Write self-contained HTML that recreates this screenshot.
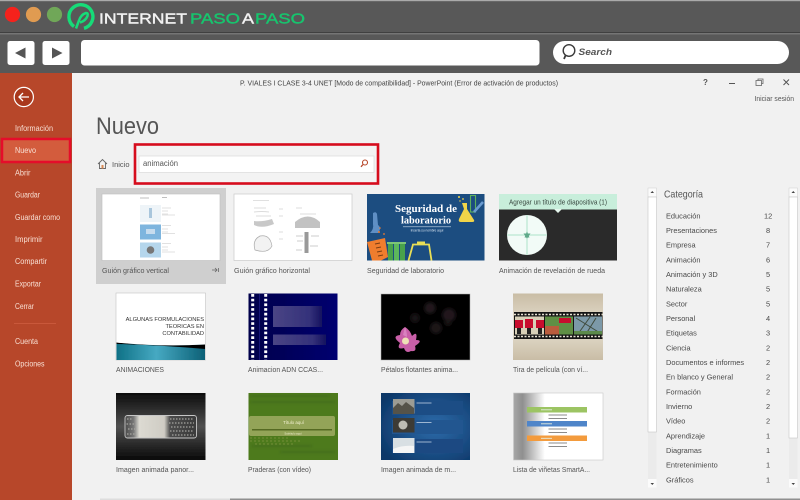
<!DOCTYPE html>
<html lang="es"><head><meta charset="utf-8"><title>PowerPoint Nuevo</title>
<style>
html,body{margin:0;padding:0;width:800px;height:500px;overflow:hidden;background:#f1f1f1}
svg{display:block;font-family:"Liberation Sans",sans-serif}
.s text{fill:#f8dfd3;font-size:8px}
.l{fill:#555;font-size:7.6px}
.c{fill:#4a4a4a;font-size:7.4px}
</style></head><body>
<svg width="800" height="500" viewBox="0 0 800 500" xmlns="http://www.w3.org/2000/svg">
<defs>
<filter id="b" x="-5%" y="-5%" width="110%" height="110%"><feGaussianBlur stdDeviation="0.35"/></filter>
<filter id="b2" x="-20%" y="-20%" width="140%" height="140%"><feGaussianBlur stdDeviation="1.4"/></filter>
<linearGradient id="teal" x1="0" x2="1"><stop offset="0" stop-color="#0f7186"/><stop offset=".45" stop-color="#46a9c2"/><stop offset="1" stop-color="#0c6076"/></linearGradient>
<linearGradient id="beige" x1="0" x2="0" y1="0" y2="1"><stop offset="0" stop-color="#c9bda5"/><stop offset=".5" stop-color="#e6dfd0"/><stop offset="1" stop-color="#c9bda6"/></linearGradient>
<linearGradient id="dark" x1="0" x2="0" y1="0" y2="1"><stop offset="0" stop-color="#0d0d0d"/><stop offset=".5" stop-color="#505050"/><stop offset="1" stop-color="#090909"/></linearGradient>
<linearGradient id="pan" x1="0" x2="1"><stop offset="0" stop-color="#4a4a4a"/><stop offset=".12" stop-color="#777"/><stop offset=".2" stop-color="#dcdad2"/><stop offset=".55" stop-color="#cfccc4"/><stop offset=".63" stop-color="#4c4c4c"/><stop offset="1" stop-color="#3a3a3a"/></linearGradient>
<radialGradient id="blue" cx=".6" cy=".5" r=".7"><stop offset="0" stop-color="#2e6cab"/><stop offset="1" stop-color="#0c3768"/></radialGradient>
<linearGradient id="gry" x1="0" x2="1"><stop offset="0" stop-color="#a8a8a8"/><stop offset=".1" stop-color="#8f8f8f"/><stop offset=".35" stop-color="#fff"/></linearGradient>
<linearGradient id="navy" x1="0" x2="1"><stop offset="0" stop-color="#00004a"/><stop offset="1" stop-color="#000070"/></linearGradient>
<linearGradient id="bar" x1="0" x2="1"><stop offset="0" stop-color="#4a4585"/><stop offset=".75" stop-color="#34317a"/><stop offset="1" stop-color="#15125f"/></linearGradient>
</defs>
<rect width="800" height="500" fill="#f1f1f1"/>
<g filter="url(#b)">
<!-- browser chrome -->
<rect width="800" height="73" fill="#595959"/>
<rect width="800" height="1.2" fill="#aaa"/>
<rect y="32" width="800" height="1" fill="#3f3f3f"/>
<rect y="33" width="800" height="1.5" fill="#757575"/>
<circle cx="12.500" cy="14.500" r="7.600" fill="#f5211c"/>
<circle cx="33.500" cy="14.500" r="7.600" fill="#e09b51"/>
<circle cx="54.500" cy="14.500" r="7.600" fill="#6fa758"/>
<path d="M74 26.500 A12 12 0 1 1 84 28.300" fill="none" stroke="#17dc78" stroke-width="3.400"/>
<path d="M76 28.500 L79 20.500 Q81 14.500 86 13 Q88.500 13 87.500 16 Q85.500 21 80 22.500" fill="none" stroke="#17dc78" stroke-width="2.500"/>
<text x="99" y="23.300" font-size="15" stroke="#f2f2f2" stroke-width=".4" fill="#f2f2f2" textLength="88" lengthAdjust="spacingAndGlyphs">INTERNET</text>
<text x="190" y="23.300" font-size="15" stroke="#17c56e" stroke-width=".4" fill="#17c56e" textLength="50" lengthAdjust="spacingAndGlyphs">PASO</text>
<text x="242" y="23.300" font-size="15" stroke="#f2f2f2" stroke-width=".4" fill="#f2f2f2" textLength="12" lengthAdjust="spacingAndGlyphs">A</text>
<text x="255" y="23.300" font-size="15" stroke="#17c56e" stroke-width=".4" fill="#17c56e" textLength="50" lengthAdjust="spacingAndGlyphs">PASO</text>
<rect x="7.500" y="41" width="27" height="24" rx="2.500" fill="#fff"/>
<path d="M15 53 L25.500 47.500 V58.500 Z" fill="#555"/>
<rect x="42.500" y="41" width="27" height="24" rx="2.500" fill="#fff"/>
<path d="M62.500 53 L52 47.500 V58.500 Z" fill="#555"/>
<rect x="81" y="40" width="458.500" height="25.500" rx="3.500" fill="#fff"/>
<rect x="553" y="41" width="236" height="23" rx="11.500" fill="#fff"/>
<circle cx="569" cy="50.500" r="5.800" fill="none" stroke="#3a3a3a" stroke-width="1.400"/>
<path d="M565.500 55.500 L564 59" stroke="#3a3a3a" stroke-width="1.800" fill="none"/>
<text x="578.500" y="55" font-size="9.500" font-weight="bold" font-style="italic" fill="#555" textLength="33.500" lengthAdjust="spacingAndGlyphs">Search</text>

<!-- sidebar -->
<rect x="0" y="73" width="72" height="427" fill="#b7472a"/>
<circle cx="23.800" cy="97" r="9.600" fill="#a9391d" stroke="#fff" stroke-width="1.200"/>
<path d="M29 97 H19 M23 93 L19 97 L23 101" fill="none" stroke="#fff" stroke-width="1.300"/>
<rect x="2" y="139" width="68" height="23" fill="#d35c3d" stroke="#e5102b" stroke-width="2.500"/>
<g class="s">
<text x="15" y="131" textLength="38" lengthAdjust="spacingAndGlyphs">Información</text>
<text x="15" y="153" textLength="21" lengthAdjust="spacingAndGlyphs">Nuevo</text>
<text x="15" y="175.500" textLength="15.500" lengthAdjust="spacingAndGlyphs">Abrir</text>
<text x="15" y="197.500" textLength="25" lengthAdjust="spacingAndGlyphs">Guardar</text>
<text x="15" y="220" textLength="45" lengthAdjust="spacingAndGlyphs">Guardar como</text>
<text x="15" y="242" textLength="27.500" lengthAdjust="spacingAndGlyphs">Imprimir</text>
<text x="15" y="264" textLength="32" lengthAdjust="spacingAndGlyphs">Compartir</text>
<text x="15" y="286.500" textLength="26" lengthAdjust="spacingAndGlyphs">Exportar</text>
<text x="15" y="309" textLength="19" lengthAdjust="spacingAndGlyphs">Cerrar</text>
<text x="15" y="344" textLength="23" lengthAdjust="spacingAndGlyphs">Cuenta</text>
<text x="15" y="366.500" textLength="29.500" lengthAdjust="spacingAndGlyphs">Opciones</text>
</g>
<rect x="14" y="323" width="42" height="1" fill="#c9583a"/>

<!-- title -->
<text x="240" y="85.500" font-size="7.300" fill="#444" textLength="318" lengthAdjust="spacingAndGlyphs">P. VIALES I  CLASE 3-4 UNET [Modo de compatibilidad] - PowerPoint (Error de activación de productos)</text>
<text x="703" y="85" font-size="8" font-weight="bold" fill="#555">?</text>
<rect x="729" y="83" width="6" height="1" fill="#555"/>
<rect x="756" y="80.500" width="5.500" height="5" fill="none" stroke="#666" stroke-width=".8"/>
<path d="M758 80.500 V79 H763 V83.500 H761.500" fill="none" stroke="#666" stroke-width=".8"/>
<path d="M783.500 79.500 L789 85 M789 79.500 L783.500 85" stroke="#555" stroke-width="1"/>
<text x="754.500" y="101" font-size="7.200" fill="#555" textLength="39.500" lengthAdjust="spacingAndGlyphs">Iniciar sesión</text>
<text x="96" y="134" font-size="24" fill="#555" textLength="63" lengthAdjust="spacingAndGlyphs">Nuevo</text>

<!-- search -->
<path d="M98 164 L102.500 159.500 L107 164 M99.500 163 V168.500 H105.500 V163" fill="none" stroke="#666" stroke-width=".9"/>
<rect x="101.500" y="165" width="2" height="3.500" fill="#d88a55"/>
<text x="112" y="167" font-size="7.600" fill="#555" textLength="17.500" lengthAdjust="spacingAndGlyphs">Inicio</text>
<rect x="135" y="144.500" width="243" height="39" fill="#f3f3f3" stroke="#d6091f" stroke-width="2.600"/>
<rect x="139" y="156" width="235" height="16.500" fill="#fff" stroke="#dedede" stroke-width=".8"/>
<text x="143" y="166" font-size="7.800" fill="#555" textLength="35" lengthAdjust="spacingAndGlyphs">animación</text>
<circle cx="365" cy="162.500" r="2.500" fill="none" stroke="#b7472a" stroke-width="1.100"/>
<path d="M363 164.500 L361 166.800" stroke="#b7472a" stroke-width="1.300"/>

<!-- row 1 -->
<rect x="96" y="188" width="130" height="96" fill="#cfcfcf"/>
<rect x="102" y="194" width="118" height="66.500" fill="#fff" stroke="#bdbdbd" stroke-width=".6"/>
<rect x="140" y="205" width="21" height="17" fill="#eef4f8"/>
<rect x="149" y="208" width="3" height="10" fill="#a9c6dc"/>
<rect x="140" y="224.500" width="21" height="15" fill="#7eb5de"/>
<rect x="146" y="229" width="9" height="5" fill="#c7dcee"/>
<rect x="140" y="242.500" width="21" height="15" fill="#b5d6ec"/>
<circle cx="150.500" cy="250" r="3.800" fill="#777"/>
<path d="M162 208 h9 M162 211 h6 M162 214 h6 M162 215 h13 M162 225.500 h9 M162 229 h6 M162 232 h6 M162 233.500 h13 M162 243.500 h9 M162 247 h6 M162 250 h6 M162 252 h13" stroke="#c4c4c4" stroke-width=".6"/>
<path d="M140 198 h9 M162 197.500 h5" stroke="#aaa" stroke-width=".7"/>
<text x="102" y="273" class="l" textLength="67" lengthAdjust="spacingAndGlyphs">Guión gráfico vertical</text>
<path d="M212 270 h5 M215 268 l2 2 -2 2 M218.500 268 v4" fill="none" stroke="#666" stroke-width=".8"/>

<rect x="234" y="194" width="118" height="66.500" fill="#fff" stroke="#c9c9c9" stroke-width=".7"/>
<path d="M253 200.500 h16" stroke="#ccc" stroke-width=".6"/>
<path d="M254 221 Q262 222 272 219 L274 224 Q262 229 254 225 Z" fill="#9a9a9a" opacity=".55"/>
<path d="M254 208 h12 M254 212 q8 -1 15 0 M256 216 h15" stroke="#dcdcdc" stroke-width="1"/>
<path d="M295 222 Q308 211 320 222 L320 228 H295 Z" fill="#9a9a9a" opacity=".6"/>
<path d="M296 208 h6 M300 214 h16" stroke="#dcdcdc" stroke-width="1"/>
<path d="M255 250 Q252 240 260 236 Q270 234 272 246 Q268 254 255 250 Z" fill="#f2f2f2" stroke="#aaa" stroke-width=".7"/>
<rect x="304.500" y="232" width="4" height="21" fill="#999"/>
<path d="M296 236 h7 M297 241 h6 M311 236 h8 M310 246 h8 M296 250 h6" stroke="#ddd" stroke-width="1.500"/>
<path d="M279 209 h4 M279 216 h4 M279 232 h4 M279 239 h4" stroke="#bbb" stroke-width=".6"/>
<text x="234" y="273" class="l" textLength="76" lengthAdjust="spacingAndGlyphs">Guión gráfico horizontal</text>

<!-- Seguridad -->
<rect x="367" y="194" width="117.500" height="66.500" fill="#1d4d80"/>
<text x="395" y="212" font-size="10.200" font-weight="bold" fill="#fff" style="font-family:'Liberation Serif',serif" textLength="62" lengthAdjust="spacingAndGlyphs">Seguridad de</text>
<text x="401" y="223.500" font-size="10.200" font-weight="bold" fill="#fff" style="font-family:'Liberation Serif',serif" textLength="50" lengthAdjust="spacingAndGlyphs">laboratorio</text>
<rect x="403" y="226.500" width="48" height=".6" fill="#cfe0ee"/>
<text x="427" y="231.500" font-size="3.200" fill="#dce8f2" text-anchor="middle">Inserta su nombre aquí</text>
<path d="M462 203 h5 l-0 6 l7 11 q1 2 -2 2 h-11 q-3 0 -2 -3 l5 -10 Z" fill="#f1d44a"/>
<rect x="470.500" y="195.500" width="5" height="16.500" fill="none" stroke="#5db05b" stroke-width="1.100"/>
<path d="M474 212 L483 202" stroke="#6b9bd1" stroke-width="2.600"/>
<circle cx="459" cy="197" r="1" fill="#f1d44a"/><circle cx="463" cy="199" r=".9" fill="#f1d44a"/><circle cx="460" cy="201" r=".7" fill="#f1d44a"/>
<path d="M373 213 q3 -2 4 1 l1 11 q4 3 0 8 h-8 q4 -4 3 -9 Z" fill="#5f8fc4"/>
<path d="M367 242 L385 238 L388 257 L381 260.500 H372 Z" fill="#ef7d2d"/>
<path d="M375 244 l5 -1 M376 248 l5 -1 M377 252 l5 -1 M378 256 l5 -1" stroke="#7a3d12" stroke-width=".9"/>
<rect x="388" y="243" width="5" height="17.500" fill="#4aa24b"/><rect x="394" y="243" width="5" height="17.500" fill="#5cb85c"/><rect x="400" y="243" width="5" height="17.500" fill="#4aa24b"/>
<rect x="387" y="242" width="19" height="2" fill="#7cc576"/>
<path d="M408.500 260.500 L413 244.500 H429 L431.500 260.500" fill="none" stroke="#eadf55" stroke-width="1.800"/>
<rect x="417" y="241.500" width="8" height="3.500" fill="#eadf55"/>
<circle cx="379" cy="232" r="1" fill="#ef7d2d"/><circle cx="384" cy="234" r=".9" fill="#ef7d2d"/><circle cx="380" cy="228" r=".8" fill="#ef7d2d"/>
<text x="367" y="273" class="l" textLength="77" lengthAdjust="spacingAndGlyphs">Seguridad de laboratorio</text>

<!-- Rueda -->
<rect x="499" y="194" width="118" height="66.500" fill="#2b2b2b"/>
<rect x="499" y="194" width="118" height="15.500" fill="#c8eedb"/>
<path d="M554 209 L558 213 L562 209 Z" fill="#e6f7ee"/>
<text x="558" y="204.500" font-size="7.400" fill="#3a4a42" text-anchor="middle" textLength="98" lengthAdjust="spacingAndGlyphs">Agregar un título de diapositiva (1)</text>
<circle cx="527" cy="235" r="20" fill="#f2fbf7"/>
<path d="M527 215 V255 M507 235 H547" stroke="#c3ebd8" stroke-width="1.500"/>
<path d="M527 231.500 L529.500 237.500 H524.500 Z M523.500 233.500 H530.500 L527 238.500 Z" fill="#5ea98a"/>
<text x="499" y="273" class="l" textLength="106" lengthAdjust="spacingAndGlyphs">Animación de revelación de rueda</text>

<!-- row 2 -->
<rect x="116" y="293" width="89.500" height="67" fill="#fff" stroke="#c4c4c4" stroke-width=".6"/>
<text x="204" y="321" font-size="5.700" fill="#333" text-anchor="end">ALGUNAS FORMULACIONES</text>
<text x="204" y="328" font-size="5.700" fill="#333" text-anchor="end">TEORICAS EN</text>
<text x="204" y="335" font-size="5.700" fill="#333" text-anchor="end">CONTABILIDAD</text>
<rect x="116.500" y="343" width="88.500" height="17" fill="url(#teal)"/>
<path d="M116.500 342.500 Q160 347 205 344.500 V349 Q160 345 116.500 344 Z" fill="#050505"/>
<path d="M116.500 341 H205 V344.500 Q160 347 116.500 342.500 Z" fill="#fff"/>
<text x="116" y="372" class="l" textLength="48" lengthAdjust="spacingAndGlyphs">ANIMACIONES</text>

<rect x="248.500" y="293.500" width="89" height="66.500" fill="url(#navy)"/>
<path d="M252.700 294 V360 M265.700 294 V360" stroke="#fff" stroke-width="3" stroke-dasharray="2.700 2"/>
<path d="M259.500 294 V360" stroke="#1c1c80" stroke-width=".8"/>
<rect x="273" y="306" width="49" height="21" fill="url(#bar)"/>
<rect x="273" y="334.500" width="53" height="10.500" fill="url(#bar)"/>
<text x="248" y="372" class="l" textLength="75" lengthAdjust="spacingAndGlyphs">Animacion ADN CCAS...</text>

<rect x="381" y="294" width="89" height="66" fill="#060606" stroke="#aaa" stroke-width=".5"/>
<g filter="url(#b2)" opacity=".55">
<circle cx="430" cy="308" r="5" fill="#3a2a30"/><circle cx="449" cy="315" r="6" fill="#3a2830"/><circle cx="415" cy="318" r="4" fill="#261c20"/><circle cx="436" cy="328" r="5" fill="#35262b"/><circle cx="448" cy="322" r="3" fill="#2c2024"/>
</g>
<path d="M405 327 Q410 330 412 336 Q418 330 416 340 Q424 340 415 346 Q417 352 411 351 Q406 354 404 348 Q396 350 400 343 Q391 336 400 335 Q400 330 405 327 Z" fill="#c95fa8"/>
<circle cx="405.500" cy="341" r="3.500" fill="#eee0b6"/>
<path d="M405 327 Q407 332 407 337 L403 335 Z" fill="#d982bf"/>
<text x="381" y="372" class="l" textLength="77" lengthAdjust="spacingAndGlyphs">Pétalos flotantes anima...</text>

<rect x="513" y="293.500" width="90" height="66.500" fill="url(#beige)"/>
<rect x="514" y="312" width="88.500" height="27" fill="#151515"/>
<path d="M514 314.500 H602.500 M514 336.500 H602.500" stroke="#e8e2d3" stroke-width="1.500" stroke-dasharray="2 1.500"/>
<rect x="515" y="316.500" width="29" height="18" fill="#d8d0b8"/>
<rect x="515" y="320" width="8" height="8" fill="#c8102e"/><rect x="525" y="319" width="8" height="9" fill="#c8102e"/><rect x="536" y="320" width="8" height="8" fill="#c8102e"/>
<rect x="517" y="328" width="4" height="6" fill="#222"/><rect x="527" y="328" width="4" height="6" fill="#222"/><rect x="538" y="328" width="4" height="6" fill="#222"/>
<rect x="545" y="316.500" width="28" height="18" fill="#5f8f45"/><rect x="545" y="326" width="14" height="8.500" fill="#b95c3e"/>
<rect x="559" y="318" width="12" height="5" fill="#c8102e"/>
<rect x="574" y="316.500" width="28" height="18" fill="#7c99a8"/>
<path d="M576 318 L600 333 M590 317 L578 334 M596 318 L586 334" stroke="#3f4b3c" stroke-width="1"/>
<rect x="574" y="331" width="28" height="3.500" fill="#5b8a4c"/>
<text x="513" y="372" class="l" textLength="75" lengthAdjust="spacingAndGlyphs">Tira de película (con ví...</text>

<!-- row 3 -->
<rect x="116" y="393" width="89.500" height="67" fill="url(#dark)"/>
<rect x="125" y="415.500" width="71.500" height="22.500" rx="2.500" fill="url(#pan)" stroke="#c6c6c6" stroke-width=".9"/>
<path d="M127 419 h6 M126.500 424 h8 M128 429 h7 M127 434 h8 M170 419 h24 M169 423 h25 M171 427 h23 M170 431 h24 M172 435 h22" stroke="#a5a5a0" stroke-width="1.300" stroke-dasharray="1.500 1.500"/>
<text x="116" y="472" class="l" textLength="78" lengthAdjust="spacingAndGlyphs">Imagen animada panor...</text>

<rect x="248.500" y="393" width="89.500" height="67" fill="#4e7a1f"/>
<g filter="url(#b2)" opacity=".6"><path d="M250 396 h80 M250 402 h85 M252 446 h60 M280 452 h55" stroke="#3b6518" stroke-width="2"/></g>
<rect x="249" y="416" width="86" height="20" rx="2" fill="#93a458"/>
<rect x="252" y="429" width="80" height="1.500" fill="#556a22"/>
<path d="M250 438 h40 M250 441 h50 M255 444 h40" stroke="#6b8b33" stroke-width="1.200" stroke-dasharray="2 2"/>
<text x="293.500" y="424" font-size="4.400" fill="#f1f0cf" text-anchor="middle">Título aquí</text>
<text x="293" y="434.500" font-size="2.800" fill="#f1f0cf" text-anchor="middle">Subtítulo aquí</text>
<text x="248" y="472" class="l" textLength="63" lengthAdjust="spacingAndGlyphs">Praderas (con vídeo)</text>

<rect x="381" y="393" width="89" height="67" fill="url(#blue)"/>
<rect x="392" y="401" width="71" height="14" fill="#1d4d85"/>
<rect x="392" y="420" width="71" height="14" fill="#215690"/>
<rect x="392" y="439" width="71" height="14" fill="#1b4a82"/>
<rect x="393" y="399" width="21.500" height="14.500" fill="#9c9c94"/><path d="M393 408 l5 -5 4 3 4 -4 8 6 v6 h-21 Z" fill="#55524a"/>
<rect x="393" y="418" width="21.500" height="14.500" fill="#3e3b36"/><circle cx="403" cy="425" r="4.500" fill="#bdbcb3"/>
<rect x="393" y="438" width="21.500" height="15" fill="#d8dfe3"/><path d="M393 449 q10 -4 21 -3 v7 h-21 Z" fill="#f5f5f5"/>
<path d="M416.500 403 h15 M416.500 422.500 h15 M416.500 442 h15" stroke="#c8d6e6" stroke-width=".8"/>
<text x="381" y="472" class="l" textLength="75" lengthAdjust="spacingAndGlyphs">Imagen animada de m...</text>

<rect x="513.500" y="393" width="89.500" height="67" fill="url(#gry)" stroke="#c8c8c8" stroke-width=".6"/>
<rect x="527" y="407" width="60" height="5.500" fill="#9cc464"/>
<rect x="527" y="421" width="60" height="5.500" fill="#4f85c9"/>
<rect x="527" y="435.500" width="60" height="5.500" fill="#f39b3e"/>
<path d="M548.500 415 h18.500 M548.500 418.500 h18.500 M548.500 429 h18.500 M548.500 432.500 h18.500 M548.500 443 h18.500 M548.500 446.500 h18.500" stroke="#666" stroke-width=".8"/>
<path d="M541 409.800 h11 M541 423.800 h11 M541 438.300 h11" stroke="#e6efe0" stroke-width=".8"/>
<text x="513" y="472" class="l" textLength="77" lengthAdjust="spacingAndGlyphs">Lista de viñetas SmartA...</text>

<rect x="100" y="498.500" width="130" height="1.500" fill="#ddd"/>
<rect x="230" y="498.500" width="570" height="1.500" fill="#8f8f8f"/>

<!-- category scrollbars -->
<rect x="648" y="188" width="8.500" height="299" fill="#ebebeb"/>
<rect x="648" y="188" width="8.500" height="9" fill="#fbfbfb" stroke="#cfcfcf" stroke-width=".5"/>
<rect x="648" y="197" width="8.500" height="235" fill="#fff" stroke="#c7c7c7" stroke-width=".6"/>
<rect x="648" y="479" width="8.500" height="8.500" fill="#fbfbfb"/>
<path d="M650.500 193 L652.300 191 L654 193 Z M650.500 483 L652.300 485 L654 483 Z" fill="#444"/>
<rect x="789" y="188" width="8.500" height="299" fill="#ebebeb"/>
<rect x="789" y="188" width="8.500" height="9" fill="#fbfbfb" stroke="#cfcfcf" stroke-width=".5"/>
<rect x="789" y="197" width="8.500" height="241" fill="#fff" stroke="#c7c7c7" stroke-width=".6"/>
<rect x="789" y="479" width="8.500" height="8.500" fill="#fbfbfb"/>
<path d="M791.500 193 L793.300 191 L795 193 Z M791.500 483 L793.300 485 L795 483 Z" fill="#444"/>
<text x="664" y="197.500" font-size="10.500" fill="#555" textLength="39" lengthAdjust="spacingAndGlyphs">Categoría</text>
<g class="c">
<text x="666" y="218.500">Educación</text><text x="764" y="218.500">12</text>
<text x="666" y="233">Presentaciones</text><text x="766" y="233">8</text>
<text x="666" y="247.700">Empresa</text><text x="766" y="247.700">7</text>
<text x="666" y="262.400">Animación</text><text x="766" y="262.400">6</text>
<text x="666" y="277">Animación y 3D</text><text x="766" y="277">5</text>
<text x="666" y="291.700">Naturaleza</text><text x="766" y="291.700">5</text>
<text x="666" y="306.400">Sector</text><text x="766" y="306.400">5</text>
<text x="666" y="321">Personal</text><text x="766" y="321">4</text>
<text x="666" y="335.700">Etiquetas</text><text x="766" y="335.700">3</text>
<text x="666" y="350.400">Ciencia</text><text x="766" y="350.400">2</text>
<text x="666" y="365">Documentos e informes</text><text x="766" y="365">2</text>
<text x="666" y="379.700">En blanco y General</text><text x="766" y="379.700">2</text>
<text x="666" y="394.400">Formación</text><text x="766" y="394.400">2</text>
<text x="666" y="409">Invierno</text><text x="766" y="409">2</text>
<text x="666" y="423.700">Vídeo</text><text x="766" y="423.700">2</text>
<text x="666" y="438.400">Aprendizaje</text><text x="766" y="438.400">1</text>
<text x="666" y="453">Diagramas</text><text x="766" y="453">1</text>
<text x="666" y="467.700">Entretenimiento</text><text x="766" y="467.700">1</text>
<text x="666" y="482.400">Gráficos</text><text x="766" y="482.400">1</text>
</g>
</g>
</svg>
</body></html>
